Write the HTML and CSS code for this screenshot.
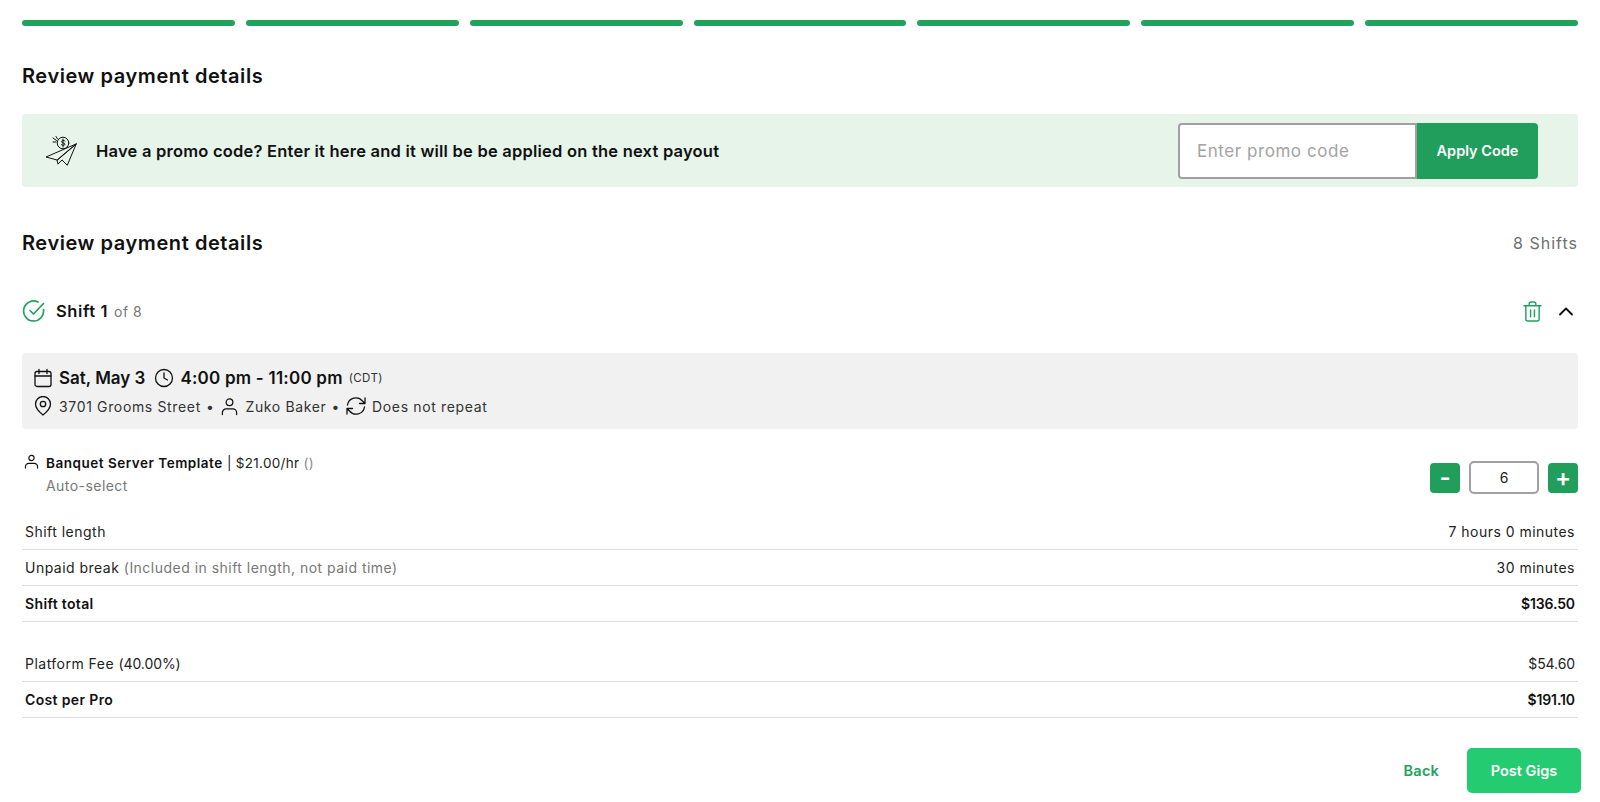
FILE: index.html
```html
<!DOCTYPE html>
<html lang="en">
<head>
<meta charset="utf-8">
<title>Review payment details</title>
<link rel="stylesheet" href="styles.css">
</head>
<body>
<div class="progress">
  <span></span><span></span><span></span><span></span><span></span><span></span><span></span>
</div>
<h2 class="heading first">Review payment details</h2>
<section class="promo">
  <div class="promo-msg">
    <svg class="plane" viewBox="0 0 32 32" width="32" height="32" fill="none" stroke="#111" stroke-width="1" stroke-linejoin="round" stroke-linecap="round">
      <circle cx="18" cy="8" r="5.800"/>
      <path d="M20 6c-.8-.9-3.500-.9-3.500.7 0 1.600 3.500.9 3.500 2.500 0 1.400-2.700 1.500-3.600.5M18 4v8"/>
      <path d="M8 3l3.500 2.500M8 7h3M11 1.500l1.500 2.500"/>
      <path d="M31 9L1 22l11 3zM31 9L12 25l1 4 4-4 5 5zM17 25l-4 4"/>
    </svg>
    <span>Have a promo code? Enter it here and it will be be applied on the next payout</span>
  </div>
  <div class="promo-form">
    <input class="promo-input" type="text" placeholder="Enter promo code">
    <button class="apply" type="button">Apply Code</button>
  </div>
</section>
<div class="section-head">
  <h2 class="heading">Review payment details</h2>
  <span class="count">8 Shifts</span>
</div>
<div class="shift-head">
  <div class="shift-title">
    <svg viewBox="0 0 24 24" width="24" height="24" fill="none" stroke="#1fa35c" stroke-width="1.700" stroke-linecap="round" stroke-linejoin="round">
      <path d="M21.500 10.500A10 10 0 1 1 16 3"/>
      <path d="M8 11.500l3.500 3.500L21.500 4.500"/>
    </svg>
    <strong>Shift 1</strong><span>of 8</span>
  </div>
  <div class="shift-actions">
    <svg viewBox="0 0 20 22" width="19" height="21" fill="none" stroke="#1fa35c" stroke-width="1.500" stroke-linecap="round" stroke-linejoin="round">
      <path d="M1 5h18M6.500 5V3a2 2 0 0 1 2-2h3a2 2 0 0 1 2 2v2M3 5v14a2 2 0 0 0 2 2h10a2 2 0 0 0 2-2V5M8 9.500v7M12 9.500v7"/>
    </svg>
    <svg viewBox="0 0 14 9" width="14" height="9" fill="none" stroke="#111" stroke-width="1.800" stroke-linecap="round" stroke-linejoin="round">
      <path d="M1 7.500l6-6 6 6"/>
    </svg>
  </div>
</div>
<div class="summary">
  <div class="summary-main">
    <svg viewBox="0 0 20 20" width="20" height="20" fill="none" stroke="#111" stroke-width="1.300" stroke-linecap="round" stroke-linejoin="round">
      <rect x="2" y="3.500" width="16" height="15" rx="2"/><path d="M2 8h16M6 1.500v4M14 1.500v4"/>
    </svg>
    <strong>Sat, May 3</strong>
    <svg class="gap" viewBox="0 0 20 20" width="20" height="20" fill="none" stroke="#111" stroke-width="1.300" stroke-linecap="round" stroke-linejoin="round">
      <circle cx="10" cy="10" r="8.500"/><path d="M10 5v5l3.500 2"/>
    </svg>
    <strong class="time">4:00 pm - 11:00 pm</strong>
    <small>(CDT)</small>
  </div>
  <div class="summary-sub">
    <svg viewBox="0 0 20 20" width="20" height="20" fill="none" stroke="#111" stroke-width="1.300" stroke-linejoin="round">
      <path d="M10 19s-7.500-6-7.500-11a7.500 7.500 0 0 1 15 0c0 5-7.500 11-7.500 11z"/><circle cx="10" cy="8" r="2.700"/>
    </svg>
    <span>3701 Grooms Street</span><span class="dot">•</span>
    <svg viewBox="0 0 20 20" width="19" height="19" fill="none" stroke="#111" stroke-width="1.300" stroke-linecap="round">
      <circle cx="10" cy="5.500" r="3.500"/><path d="M2.500 18.500v-2a4 4 0 0 1 4-4h7a4 4 0 0 1 4 4v2"/>
    </svg>
    <span>Zuko Baker</span><span class="dot">•</span>
    <svg viewBox="0 0 20 20" width="20" height="20" fill="none" stroke="#111" stroke-width="1.300" stroke-linecap="round" stroke-linejoin="round">
      <path d="M1.500 9A8.500 8.500 0 0 1 16.500 5L19 7.500M19 2v5.500h-5.500M18.500 11A8.500 8.500 0 0 1 3.500 15L1 12.500M1 18v-5.500h5.500"/>
    </svg>
    <span>Does not repeat</span>
  </div>
</div>
<div class="role">
  <svg viewBox="0 0 16 16" width="15" height="15" fill="none" stroke="#111" stroke-width="1.200" stroke-linecap="round">
    <circle cx="8" cy="4.200" r="2.800"/><path d="M1.500 15v-1.500a3.500 3.500 0 0 1 3.500-3.500h6a3.500 3.500 0 0 1 3.500 3.500V15"/>
  </svg>
  <div class="role-text">
    <div class="role-name"><strong>Banquet Server Template</strong> | $21.00/hr <span>()</span></div>
    <div class="role-select">Auto-select</div>
  </div>
  <div class="stepper">
    <button class="step" type="button">-</button>
    <div class="qty">6</div>
    <button class="step" type="button">+</button>
  </div>
</div>
<div class="table">
  <div class="row"><span>Shift length</span><span>7 hours 0 minutes</span></div>
  <div class="row"><span>Unpaid break <em>(Included in shift length, not paid time)</em></span><span>30 minutes</span></div>
  <div class="row total"><span>Shift total</span><span class="num">$136.50</span></div>
</div>
<div class="table second">
  <div class="row"><span>Platform Fee <span class="num">(40.00%)</span></span><span class="num">$54.60</span></div>
  <div class="row total"><span>Cost per Pro</span><span class="num">$191.10</span></div>
</div>
<div class="footer">
  <button class="back" type="button">Back</button>
  <button class="post" type="button">Post Gigs</button>
</div>
</body>
</html>
```
FILE: styles.css
```css
* { box-sizing: border-box; }
html, body { height: 100%; }
body {
  margin: 0;
  padding: 20px 22px 0;
  background: #fff;
  color: #111;
  font-family: Inter, "Noto Sans", "Liberation Sans", sans-serif;
  overflow: hidden;
}
button, input { font-family: inherit; }
.progress { display: flex; gap: 11px; height: 6px; }
.progress span { flex: 1; background: #1fa35c; border-radius: 3px; }
.heading { margin: 0; font-size: 20px; line-height: 26px; font-weight: 600; letter-spacing: 0.57px; color: #111; }
.heading.first { margin-top: 37px; }
.promo {
  display: flex; justify-content: space-between; align-items: center;
  margin-top: 25px; height: 73px; padding: 0 40px 0 23px;
  background: #e6f4e9; border-radius: 4px;
}
.promo-msg { display: flex; align-items: center; gap: 19px; font-size: 16.500px; font-weight: 600; letter-spacing: 0.22px; }
.promo-form { display: flex; }
.promo-input {
  width: 239px; height: 56px; padding: 0 17px;
  border: 2px solid #a0a0a0; border-radius: 4px 0 0 4px;
  font-size: 17px; letter-spacing: 0.55px; background: #fff; outline: none;
}
.promo-input::placeholder { color: #a3a3a3; opacity: 1; }
.apply {
  width: 121px; height: 56px; border: 0; border-radius: 0 4px 4px 0;
  background: #219e5c; color: #fff; font-size: 14.500px; font-weight: 600;
}
.section-head { display: flex; justify-content: space-between; align-items: center; margin-top: 43px; height: 26px; }
.count { font-size: 16px; color: #6f6f6f; letter-spacing: 1px; }
.shift-head { display: flex; justify-content: space-between; align-items: center; margin-top: 42px; height: 26px; }
.shift-title { display: flex; align-items: center; font-size: 16.500px; font-weight: 600; }
.shift-title strong { margin-left: 10px; font-weight: 600; letter-spacing: 0.6px; }
.shift-title span { margin-left: 6px; font-size: 14px; font-weight: 400; color: #777; letter-spacing: 0.5px; }
.shift-actions { display: flex; align-items: center; gap: 17px; padding-right: 5px; }
.summary {
  margin-top: 29px; height: 76px; padding: 12px 11px 0;
  background: #f1f1f1; border-radius: 4px;
}
.summary-main { display: flex; align-items: center; height: 26px; font-size: 17px; }
.summary-main strong { margin-left: 6px; font-weight: 600; }
.summary-main .time { letter-spacing: 0.22px; }
.summary-main .gap { margin-left: 9px; }
.summary-main small { margin-left: 6px; font-size: 11.500px; color: #333; letter-spacing: 0.4px; }
.summary-sub { display: flex; align-items: center; height: 26px; margin-top: 2px; font-size: 14px; letter-spacing: 0.65px; color: #333; }
.summary-sub span { margin-left: 6px; }
.summary-sub .dot { margin: 0 6px 0 5px; }
.role { display: flex; align-items: flex-start; margin-top: 24px; padding-left: 2px; }
.role svg { margin-top: 1px; }
.role-text { flex: 1; margin-left: 7px; font-size: 13.500px; letter-spacing: 0.3px; }
.role-name { line-height: 20px; color: #222; }
.role-name strong { font-weight: 600; color: #111; letter-spacing: 0.52px; }
.role-name span { color: #888; }
.role-select { margin-top: 3px; line-height: 20px; font-size: 14px; color: #777; letter-spacing: 0.45px; }
.stepper { display: flex; align-items: center; gap: 9px; margin-top: 8px; }
.step {
  width: 30px; height: 30px; padding: 0; border: 0; border-radius: 4px;
  background: #219e5c; color: #fff; font-size: 24px; line-height: 26px; font-weight: 600;
}
.qty {
  width: 70px; height: 33px; border: 2px solid #a0a0a0; border-radius: 5px;
  text-align: center; font-size: 14px; line-height: 29px; color: #222;
}
.table { margin-top: 18px; font-size: 14px; letter-spacing: 0.48px; }
.table.second { margin-top: 24px; }
.row {
  display: flex; justify-content: space-between; align-items: center;
  height: 36px; padding: 0 3px; border-bottom: 1px solid #ddd; color: #222;
}
.row em { font-style: normal; color: #777; }
.row .num { letter-spacing: -0.1px; }
.row.total { font-weight: 600; color: #111; letter-spacing: 0.35px; }
.footer { display: flex; justify-content: flex-end; align-items: center; gap: 28px; margin: 30px -3px 0 0; }
.back { padding: 0; border: 0; background: none; color: #1fa35c; font-size: 14.500px; font-weight: 600; letter-spacing: 0.2px; }
.post {
  width: 114px; height: 45px; border: 0; border-radius: 5px;
  background: #24cb70; color: #fff; font-size: 14.500px; font-weight: 600;
}
```
